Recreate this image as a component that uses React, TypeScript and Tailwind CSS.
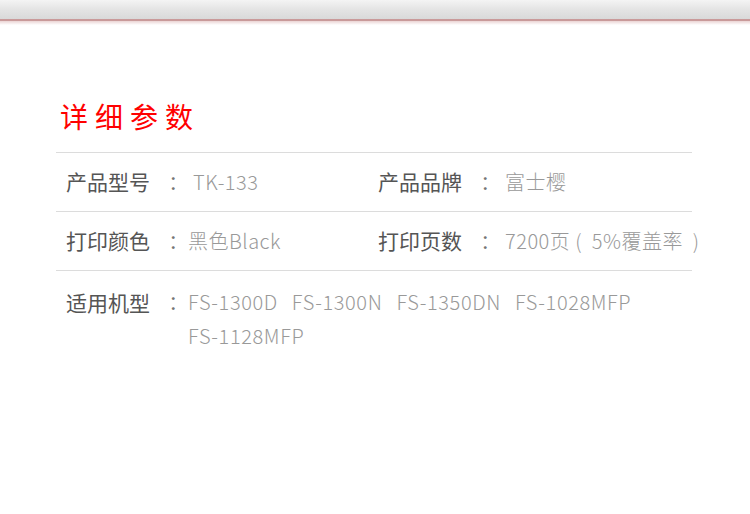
const FONT = { fontFamily: '"Noto Sans CJK SC", "Noto Sans", sans-serif' };

type Cell = { label: string; value: string; spaced?: boolean };

const rows: Cell[][] = [
  [
    { label: '产品型号', value: 'TK-133', spaced: true },
    { label: '产品品牌', value: '富士樱', spaced: true },
  ],
  [
    { label: '打印颜色', value: '黑色Black' },
    { label: '打印页数', value: '7200页 (  5%覆盖率  )', spaced: true },
  ],
];

function Item({ cell, width }: { cell: Cell; width: string }) {
  return (
    <div className={`flex items-center ${width}`}>
      <span className="w-[102px] shrink-0 text-[21px] text-[#555]">{cell.label}</span>
      <span className="w-[20px] shrink-0 text-center text-[19px] text-[#777]">：</span>
      <span className={`whitespace-pre text-[20px] font-light tracking-[0.5px] text-[#999] ${cell.spaced ? 'pl-[5px]' : ''}`}>{cell.value}</span>
    </div>
  );
}

export default function App() {
  return (
    <div className="w-[750px] h-[514px] bg-white overflow-hidden" style={FONT}>
      <div className="h-[19px] bg-gradient-to-b from-[#f4f4f4] via-[#e4e4e4] to-[#d9d9d9]" />
      <div className="h-[2px] bg-[#c99a9a]" />
      <div className="h-[4px] bg-gradient-to-b from-[#ead4d4] to-white" />

      <div className="pl-[60px] pt-[74px]">
        <h1 className="text-[28px] leading-[34px] tracking-[7px] text-[#ff0000]">详细参数</h1>
      </div>

      <div className="ml-[56px] w-[636px] mt-[19px] border-t border-[#dcdcdc]">
        {rows.map((row, i) => (
          <div key={i} className="flex items-center h-[59px] border-b border-[#dcdcdc] pl-[10px]">
            <Item cell={row[0]} width="w-[312px] shrink-0" />
            <Item cell={row[1]} width="flex-1 min-w-0" />
          </div>
        ))}
        <div className="flex pl-[10px] pt-[14px]">
          <span className="w-[102px] shrink-0 text-[21px] leading-[34px] text-[#555]">适用机型</span>
          <span className="w-[20px] shrink-0 text-center text-[19px] leading-[34px] text-[#777]">：</span>
          <div className="text-[20px] leading-[34px] font-light tracking-[0.6px] text-[#999]">
            <div className="flex gap-[14px]">
              <span>FS-1300D</span>
              <span>FS-1300N</span>
              <span>FS-1350DN</span>
              <span>FS-1028MFP</span>
            </div>
            <div>FS-1128MFP</div>
          </div>
        </div>
      </div>
    </div>
  );
}
